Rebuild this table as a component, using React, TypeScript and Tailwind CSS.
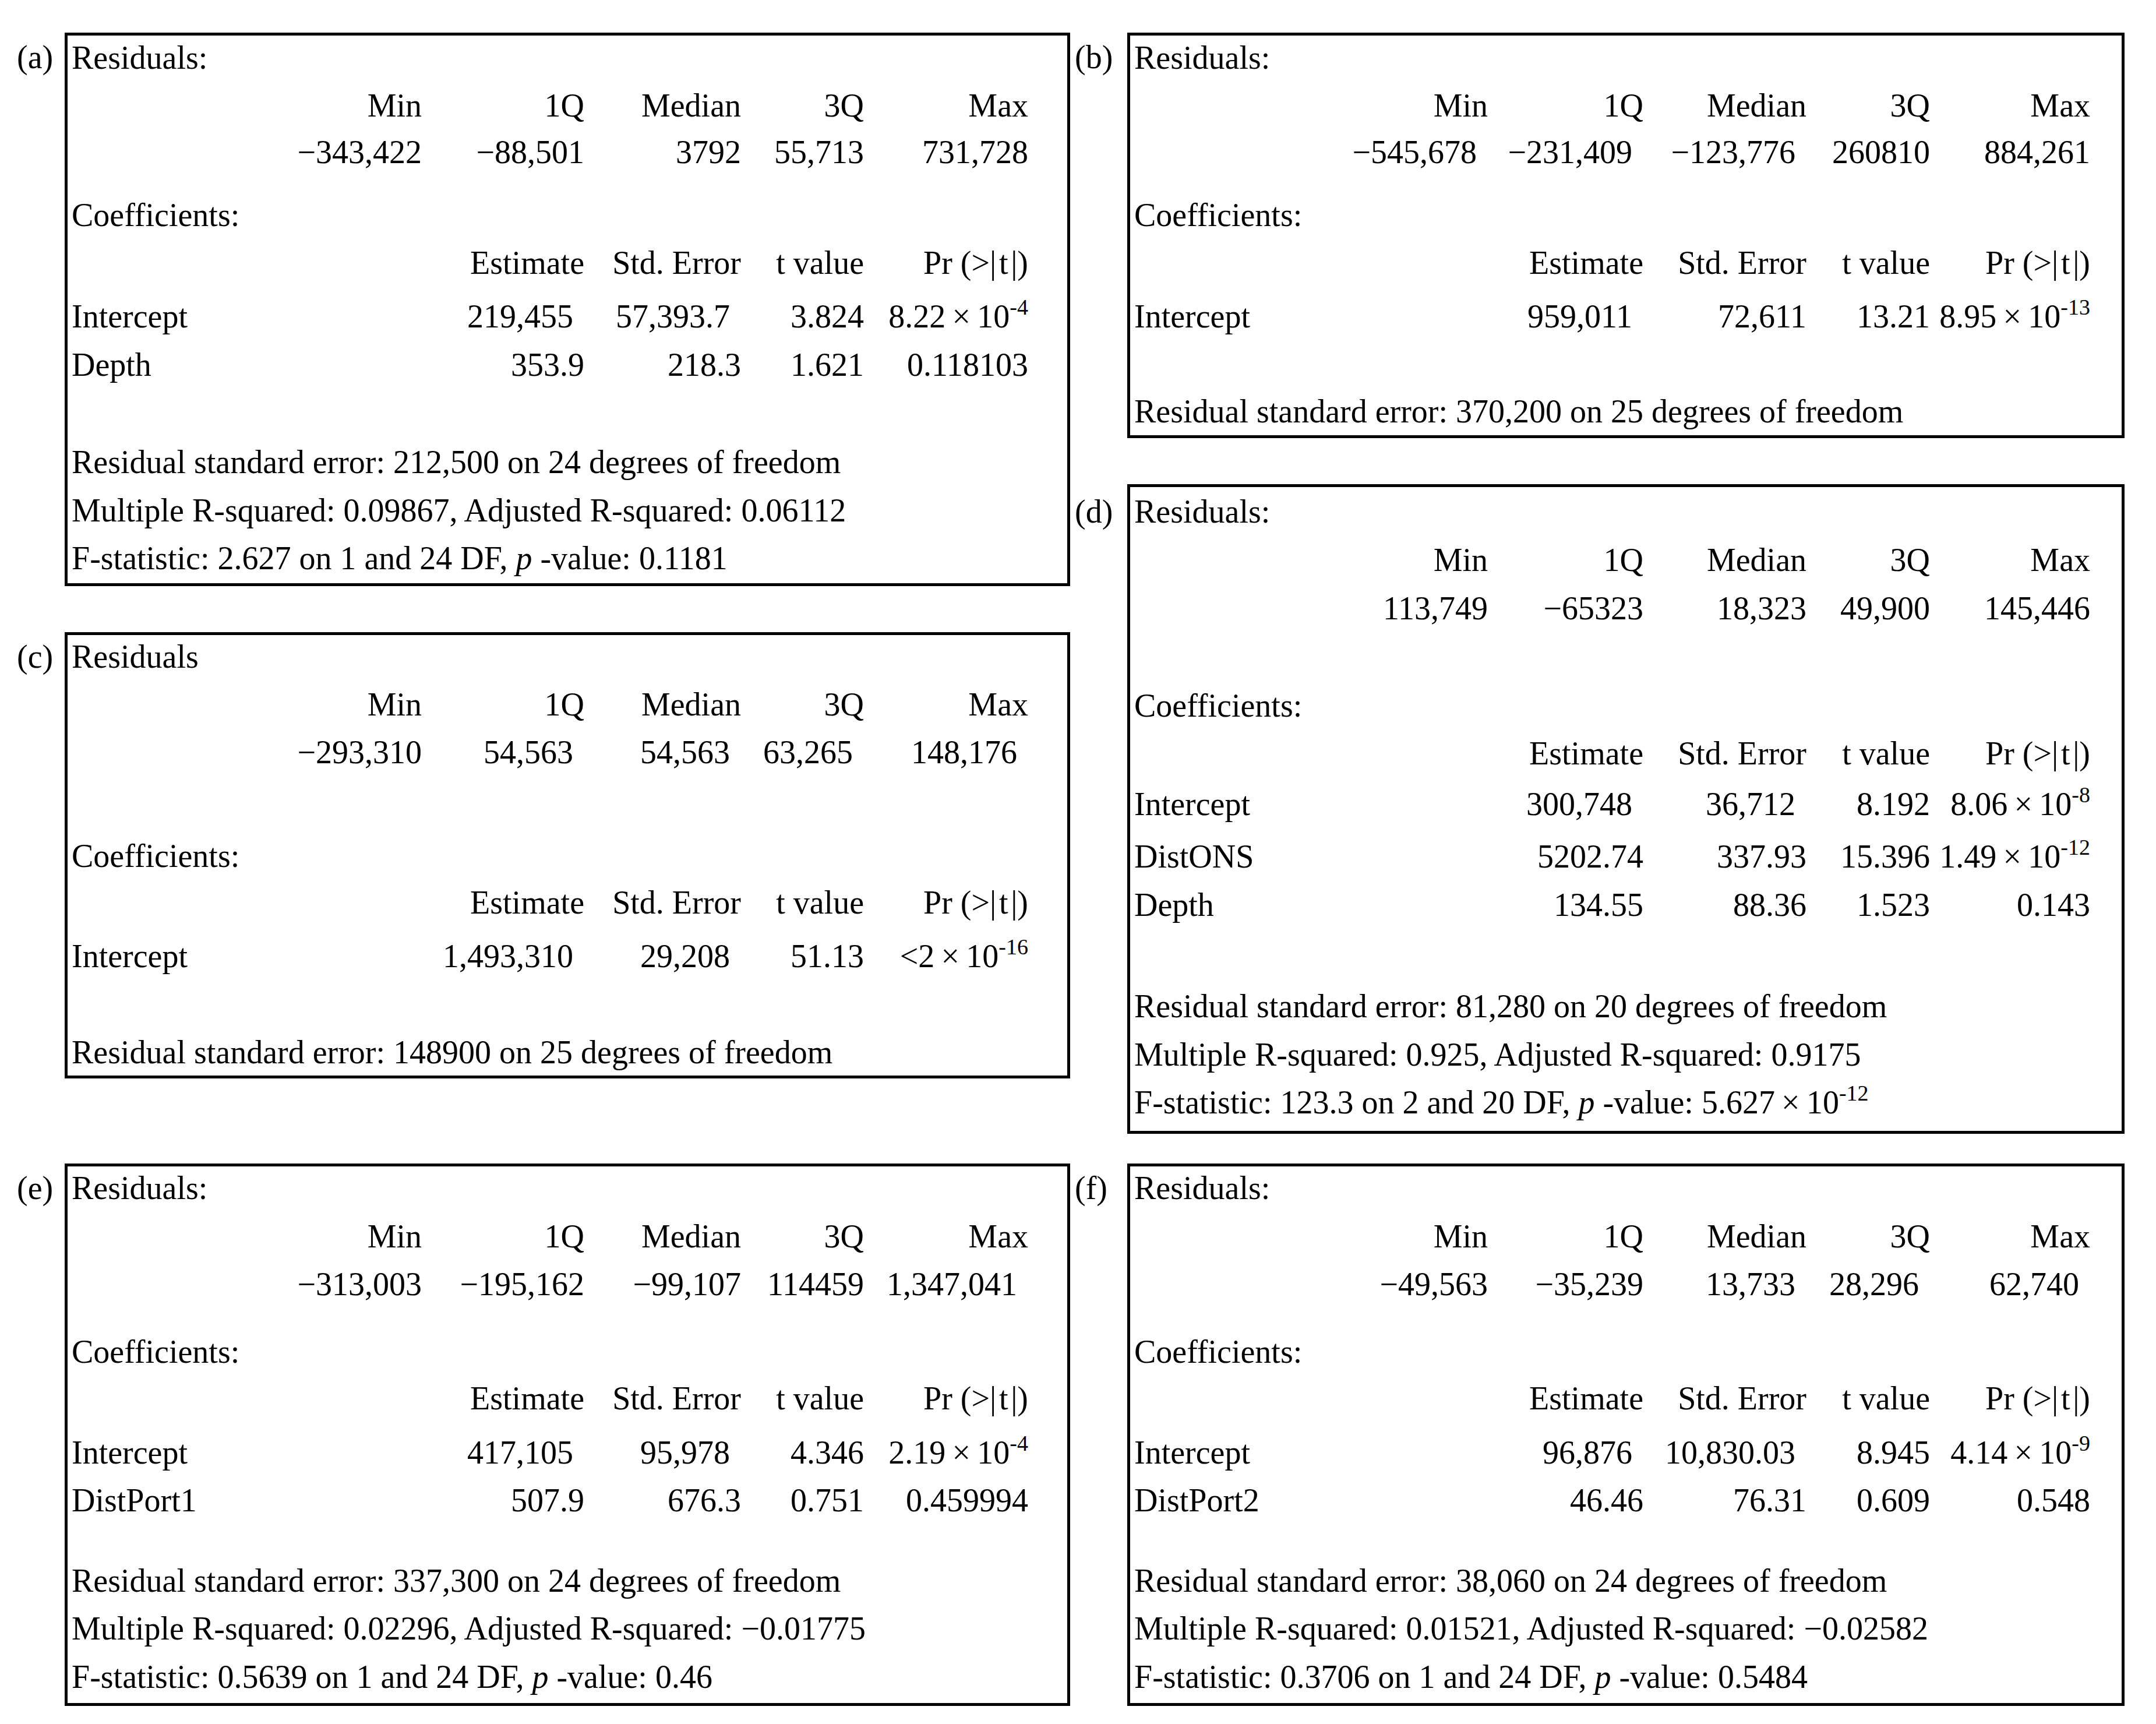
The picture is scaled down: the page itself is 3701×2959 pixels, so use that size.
import type { ReactNode } from "react";

// column widths (right-aligned cells) for the left and right stacks of panels
const LEFT = ["w-[601px]", "w-[279px]", "w-[269px]", "w-[211px]", "w-[282px]"];
const RIGHT = ["w-[607px]", "w-[267px]", "w-[280px]", "w-[212px]", "w-[275px]"];

const HDR_R = ["Min", "1Q", "Median", "3Q", "Max"];
const HDR_C = ["Estimate", "Std. Error", "t value", "Pr (>|\u200at\u200a|)"];

type Row =
  | { k: "t"; mt: string; text: ReactNode }
  | { k: "r"; mt: string; cells: ReactNode[] }
  | { k: "c"; mt: string; label: string; cells: ReactNode[] };

// value that sits a little left of its column edge
const o = (s: ReactNode) => <span className="pr-[19px]">{s}</span>;
const sci = (m: string, e: string) => (
  <>
    {m}
    {"\u2009×\u2009"}10<sup className="top-[-22px] text-[38px]">{e}</sup>
  </>
);
const pval = (head: string, tail: ReactNode) => (
  <>
    {head} <i>p</i> -value: {tail}
  </>
);

type PanelData = {
  label: string;
  lpt: string;
  h: string;
  rows: Row[];
};

const A: PanelData = {
  label: "(a)",
  lpt: "pt-[1px]",
  h: "h-[950px]",
  rows: [
    { k: "t", mt: "-mt-[3px]", text: "Residuals:" },
    { k: "r", mt: "mt-0", cells: HDR_R },
    { k: "r", mt: "-mt-[2px]", cells: ["−343,422", "−88,501", "3792", "55,713", "731,728"] },
    { k: "t", mt: "mt-[26px]", text: "Coefficients:" },
    { k: "c", mt: "mt-0", label: "", cells: HDR_C },
    { k: "c", mt: "mt-[10px]", label: "Intercept", cells: [o("219,455"), o("57,393.7"), "3.824", sci("8.22", "-4")] },
    { k: "c", mt: "mt-[1px]", label: "Depth", cells: ["353.9", "218.3", "1.621", "0.118103"] },
    { k: "t", mt: "mt-[85px]", text: "Residual standard error: 212,500 on 24 degrees of freedom" },
    { k: "t", mt: "mt-[1px]", text: "Multiple R-squared: 0.09867, Adjusted R-squared: 0.06112" },
    { k: "t", mt: "mt-0", text: pval("F-statistic: 2.627 on 1 and 24 DF,", "0.1181") },
  ],
};

const B: PanelData = {
  label: "(b)",
  lpt: "pt-[1px]",
  h: "h-[696px]",
  rows: [
    { k: "t", mt: "-mt-[3px]", text: "Residuals:" },
    { k: "r", mt: "mt-0", cells: HDR_R },
    { k: "r", mt: "-mt-[2px]", cells: [o("−545,678"), o("−231,409"), o("−123,776"), "260810", "884,261"] },
    { k: "t", mt: "mt-[26px]", text: "Coefficients:" },
    { k: "c", mt: "mt-0", label: "", cells: HDR_C },
    { k: "c", mt: "mt-[10px]", label: "Intercept", cells: [o("959,011"), "72,611", "13.21", sci("8.95", "-13")] },
    { k: "t", mt: "mt-[81px]", text: "Residual standard error: 370,200 on 25 degrees of freedom" },
  ],
};

const C: PanelData = {
  label: "(c)",
  lpt: "pt-[1px]",
  h: "h-[766px]",
  rows: [
    { k: "t", mt: "-mt-[4px]", text: "Residuals" },
    { k: "r", mt: "mt-0", cells: HDR_R },
    { k: "r", mt: "mt-0", cells: ["−293,310", o("54,563"), o("54,563"), o("63,265"), o("148,176")] },
    { k: "t", mt: "mt-[96px]", text: "Coefficients:" },
    { k: "c", mt: "-mt-[2px]", label: "", cells: HDR_C },
    { k: "c", mt: "mt-[10px]", label: "Intercept", cells: [o("1,493,310"), o("29,208"), "51.13", sci("<2", "-16")] },
    { k: "t", mt: "mt-[83px]", text: "Residual standard error: 148900 on 25 degrees of freedom" },
  ],
};

const D: PanelData = {
  label: "(d)",
  lpt: "pt-[6px]",
  h: "h-[1115px]",
  rows: [
    { k: "t", mt: "mt-[1px]", text: "Residuals:" },
    { k: "r", mt: "mt-[1px]", cells: HDR_R },
    { k: "r", mt: "mt-[1px]", cells: ["113,749", "−65323", "18,323", "49,900", "145,446"] },
    { k: "t", mt: "mt-[85px]", text: "Coefficients:" },
    { k: "c", mt: "mt-0", label: "", cells: HDR_C },
    { k: "c", mt: "mt-[5px]", label: "Intercept", cells: [o("300,748"), o("36,712"), "8.192", sci("8.06", "-8")] },
    { k: "c", mt: "mt-[8px]", label: "DistONS", cells: ["5202.74", "337.93", "15.396", sci("1.49", "-12")] },
    { k: "c", mt: "mt-[1px]", label: "Depth", cells: ["134.55", "88.36", "1.523", "0.143"] },
    { k: "t", mt: "mt-[92px]", text: "Residual standard error: 81,280 on 20 degrees of freedom" },
    { k: "t", mt: "mt-[1px]", text: "Multiple R-squared: 0.925, Adjusted R-squared: 0.9175" },
    { k: "t", mt: "mt-0", text: pval("F-statistic: 123.3 on 2 and 20 DF,", sci("5.627", "-12")) },
  ],
};

const E: PanelData = {
  label: "(e)",
  lpt: "pt-[1px]",
  h: "h-[931px]",
  rows: [
    { k: "t", mt: "-mt-[4px]", text: "Residuals:" },
    { k: "r", mt: "mt-[1px]", cells: HDR_R },
    { k: "r", mt: "mt-0", cells: ["−313,003", "−195,162", "−99,107", "114459", o("1,347,041")] },
    { k: "t", mt: "mt-[34px]", text: "Coefficients:" },
    { k: "c", mt: "-mt-[2px]", label: "", cells: HDR_C },
    { k: "c", mt: "mt-[11px]", label: "Intercept", cells: [o("417,105"), o("95,978"), "4.346", sci("2.19", "-4")] },
    { k: "c", mt: "mt-0", label: "DistPort1", cells: ["507.9", "676.3", "0.751", "0.459994"] },
    { k: "t", mt: "mt-[56px]", text: "Residual standard error: 337,300 on 24 degrees of freedom" },
    { k: "t", mt: "mt-0", text: "Multiple R-squared: 0.02296, Adjusted R-squared: −0.01775" },
    { k: "t", mt: "mt-[1px]", text: pval("F-statistic: 0.5639 on 1 and 24 DF,", "0.46") },
  ],
};

const F: PanelData = {
  label: "(f)",
  lpt: "pt-[1px]",
  h: "h-[931px]",
  rows: [
    { k: "t", mt: "-mt-[4px]", text: "Residuals:" },
    { k: "r", mt: "mt-[1px]", cells: HDR_R },
    { k: "r", mt: "mt-0", cells: ["−49,563", "−35,239", o("13,733"), o("28,296"), o("62,740")] },
    { k: "t", mt: "mt-[34px]", text: "Coefficients:" },
    { k: "c", mt: "-mt-[2px]", label: "", cells: HDR_C },
    { k: "c", mt: "mt-[11px]", label: "Intercept", cells: [o("96,876"), o("10,830.03"), "8.945", sci("4.14", "-9")] },
    { k: "c", mt: "mt-0", label: "DistPort2", cells: ["46.46", "76.31", "0.609", "0.548"] },
    { k: "t", mt: "mt-[56px]", text: "Residual standard error: 38,060 on 24 degrees of freedom" },
    { k: "t", mt: "mt-0", text: "Multiple R-squared: 0.01521, Adjusted R-squared: −0.02582" },
    { k: "t", mt: "mt-[1px]", text: pval("F-statistic: 0.3706 on 1 and 24 DF,", "0.5484") },
  ],
};

function Line({ row, cols }: { row: Row; cols: string[] }) {
  if (row.k === "t") {
    return <div className={`h-[82px] whitespace-nowrap ${row.mt}`}>{row.text}</div>;
  }
  if (row.k === "r") {
    return (
      <div className={`flex h-[82px] whitespace-nowrap ${row.mt}`}>
        {row.cells.map((c, i) => (
          <div key={i} className={`${cols[i]} shrink-0 text-right`}>
            {c}
          </div>
        ))}
      </div>
    );
  }
  return (
    <div className={`flex h-[82px] whitespace-nowrap ${row.mt}`}>
      <div className={`${cols[0]} shrink-0`}>{row.label}</div>
      {row.cells.map((c, i) => (
        <div key={i} className={`${cols[i + 1]} shrink-0 text-right`}>
          {c}
        </div>
      ))}
    </div>
  );
}

function Panel({ p, side, className = "" }: { p: PanelData; side: "l" | "r"; className?: string }) {
  const cols = side === "l" ? LEFT : RIGHT;
  return (
    <div className={`flex items-start ${className}`}>
      <div className={`${side === "l" ? "w-[111px] pl-[29px]" : "w-[90px]"} shrink-0 ${p.lpt}`}>{p.label}</div>
      <div
        className={`${side === "l" ? "w-[1726px]" : "w-[1712px]"} ${p.h} shrink-0 border-[5px] border-black pl-[7px]`}
      >
        {p.rows.map((r, i) => (
          <Line key={i} row={r} cols={cols} />
        ))}
      </div>
    </div>
  );
}

export default function App() {
  return (
    <div className="h-[2959px] w-[3701px] bg-white pt-[56px] font-['Liberation_Serif',serif] text-[56px] leading-[82px] text-black">
      <div className="flex items-start">
        <div className="flex w-[1837px] shrink-0 flex-col">
          <Panel p={A} side="l" />
          <Panel p={C} side="l" className="mt-[79px]" />
        </div>
        <div className="flex flex-col pl-[8px]">
          <Panel p={B} side="r" />
          <Panel p={D} side="r" className="mt-[79px]" />
        </div>
      </div>
      <div className="mt-[51px] flex items-start">
        <div className="w-[1837px] shrink-0">
          <Panel p={E} side="l" />
        </div>
        <div className="pl-[8px]">
          <Panel p={F} side="r" />
        </div>
      </div>
    </div>
  );
}
